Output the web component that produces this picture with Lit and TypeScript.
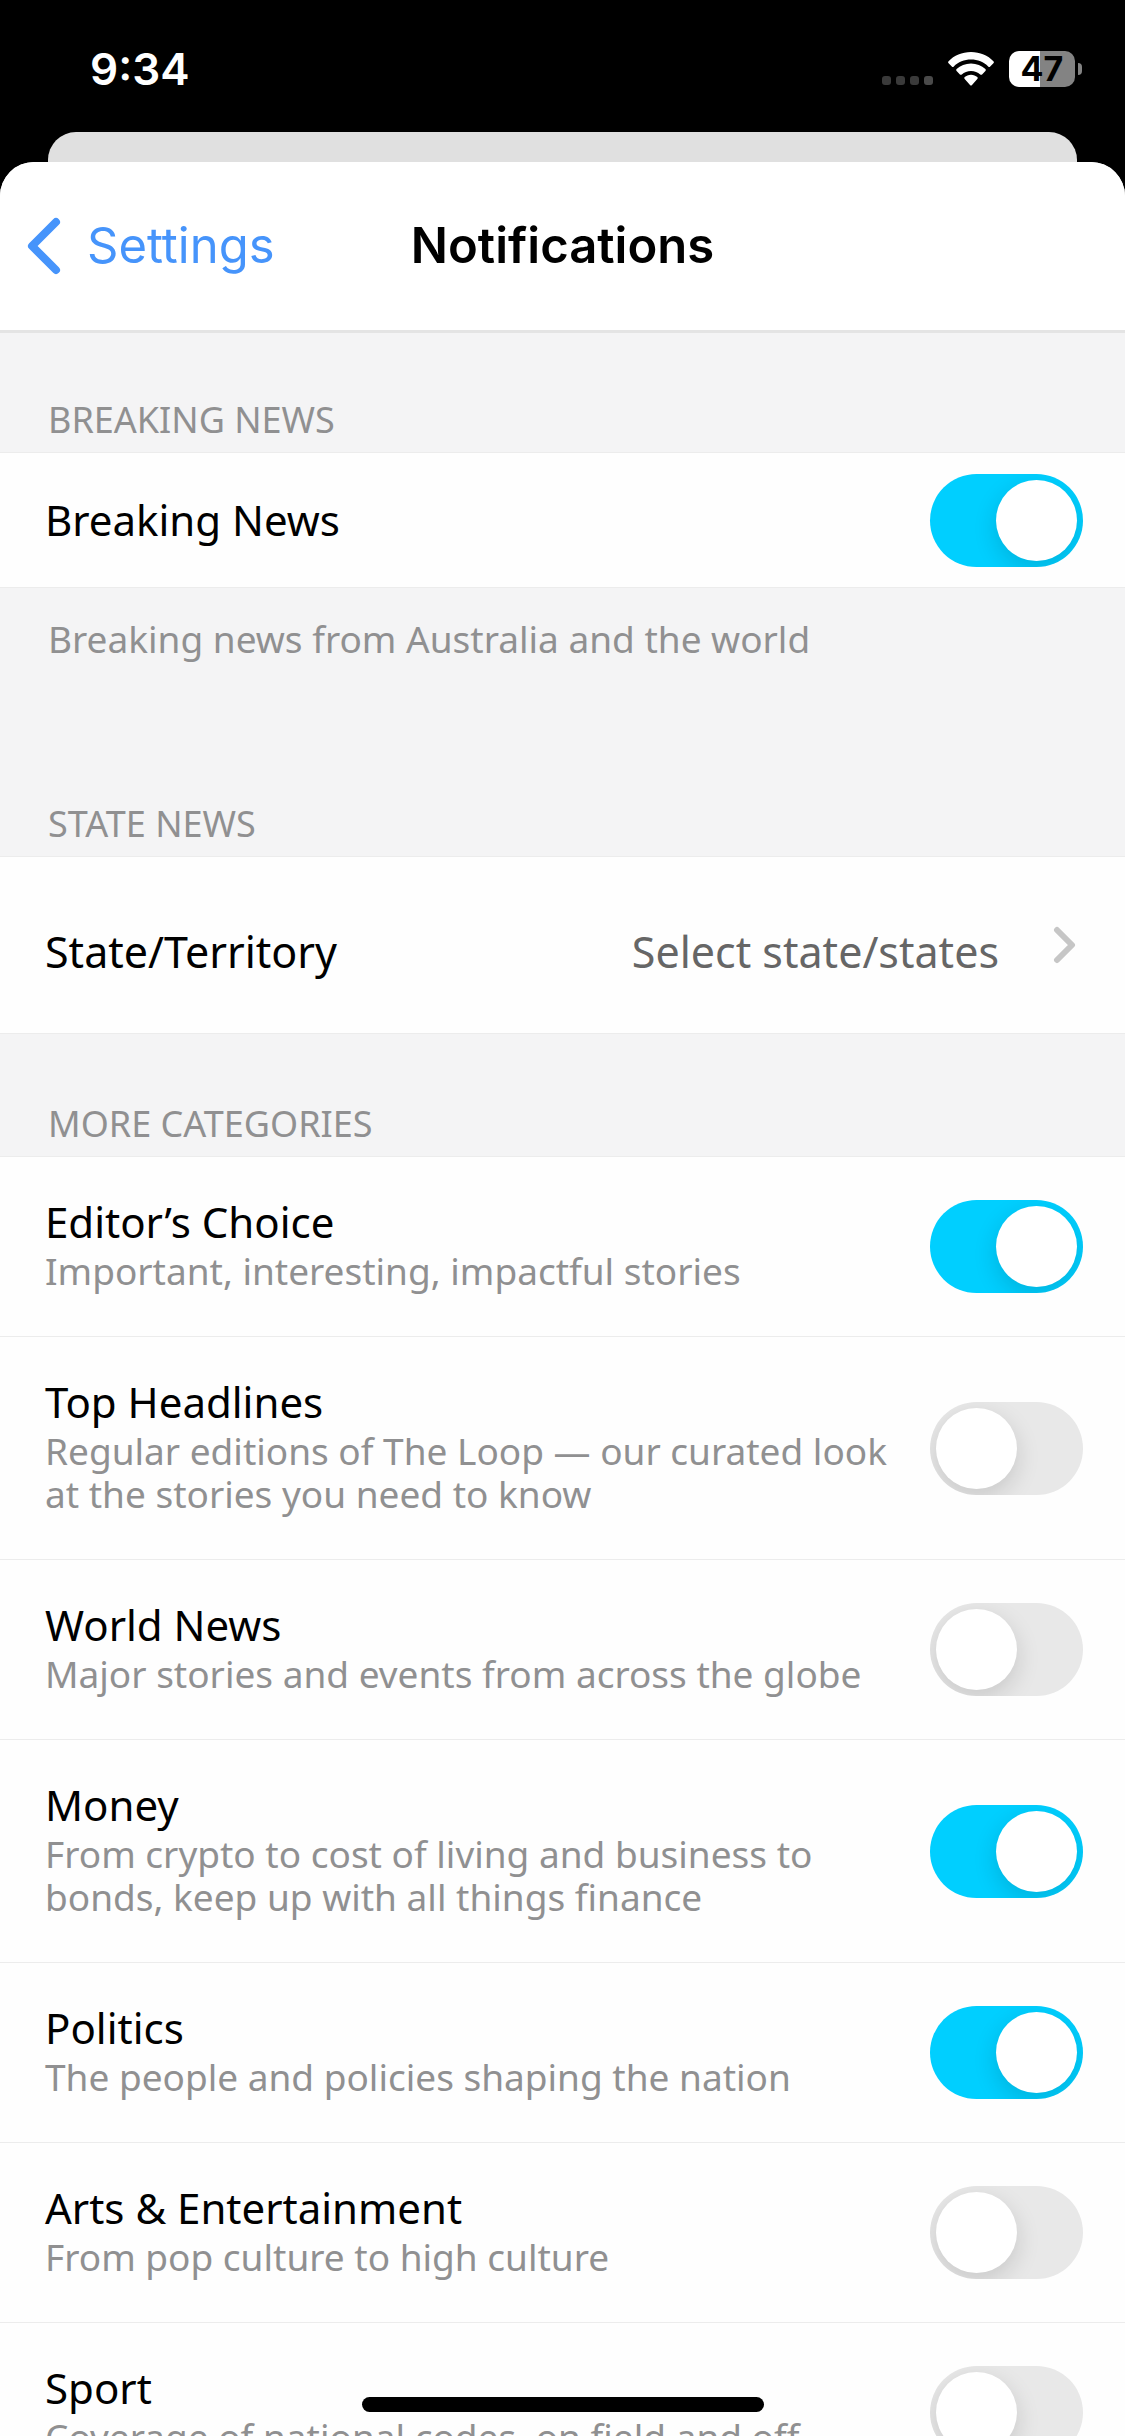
import { LitElement, html, css, svg, nothing } from "lit";
import { customElement, property, state } from "lit/decorators.js";

interface Category {
  id: string;
  title: string;
  description: string;
  on: boolean;
}

@customElement("toggle-row")
class ToggleRow extends LitElement {
  @property() heading = "";
  @property() description = "";
  @property({ type: Boolean }) on = false;

  static styles = css`
    :host {
      display: block;
      background: #fefefe;
      border-bottom: 1px solid #ececec;
    }
    .row {
      display: flex;
      align-items: center;
      gap: 32px;
      padding: 0 42px 0 45px;
    }
    .text {
      flex: 1;
      min-width: 0;
      padding: 40px 0 44px;
    }
    .single {
      padding: 42px 0 42px;
    }
    .title {
      display: block;
      font-size: 42px;
      line-height: 50px;
      color: #000;
    }
    .description {
      display: block;
      margin-top: 2px;
      font-size: 37px;
      line-height: 43px;
      color: #909091;
    }
    .switch {
      appearance: none;
      flex: none;
      box-sizing: border-box;
      width: 153px;
      height: 93px;
      margin: 0;
      padding: 6px;
      border-radius: 47px;
      background: #e8e8e8;
      overflow: hidden;
      display: flex;
      cursor: pointer;
    }
    .switch::before {
      content: "";
      width: 81px;
      height: 81px;
      border-radius: 50%;
      background: #fff;
      box-shadow: 0 8px 24px rgba(0, 0, 0, 0.14);
    }
    .switch:checked {
      background: #00cfff;
      justify-content: flex-end;
    }
  `;

  private onChange(e: Event) {
    this.on = (e.target as HTMLInputElement).checked;
  }

  render() {
    return html`
      <label class="row">
        <span class="text ${this.description ? "" : "single"}">
          <span class="title">${this.heading}</span>
          ${this.description
            ? html`<span class="description">${this.description}</span>`
            : nothing}
        </span>
        <input
          class="switch"
          type="checkbox"
          role="switch"
          .checked=${this.on}
          @change=${this.onChange}
        />
      </label>
    `;
  }
}

@customElement("status-bar")
class StatusBar extends LitElement {
  static styles = css`
    :host {
      display: flex;
      align-items: center;
      justify-content: space-between;
      height: 132px;
      box-sizing: border-box;
      padding: 6px 43px 0 90px;
      background: #000;
      color: #fff;
      font-family: Inter, "Liberation Sans", sans-serif;
    }
    .time {
      font-size: 44px;
      line-height: 54px;
      font-weight: 600;
    }
    .icons {
      display: flex;
      align-items: center;
      gap: 15px;
    }
    .signal {
      display: flex;
      align-self: flex-end;
      gap: 5px;
      padding-bottom: 2px;
    }
    .dot {
      width: 9px;
      height: 9px;
      border-radius: 3px;
      background: #3a3a3a;
    }
    .dot:last-child {
      background: #4a4a4a;
    }
    .battery {
      display: flex;
      align-items: center;
      gap: 3px;
    }
    .cell {
      width: 66px;
      height: 36px;
      border-radius: 10px;
      background: linear-gradient(to right, #fff 47%, #838383 47%);
      color: #000;
      font-size: 34px;
      line-height: 36px;
      font-weight: 700;
      text-align: center;
    }
    .cap {
      width: 4px;
      height: 12px;
      border-radius: 0 6px 6px 0;
      background: #838383;
    }
    svg {
      display: block;
    }
  `;

  render() {
    return html`
      <span class="time">9:34</span>
      <div class="icons">
        <div class="signal">
          ${[0, 1, 2, 3].map(() => html`<span class="dot"></span>`)}
        </div>
        <svg width="46" height="34" viewBox="0 0 46 34" aria-hidden="true">
          ${svg`
            <path fill="#fff" d="M23 0C14 0 6 3.500 .6 9.200a1.400 1.400 0 0 0 0 2l3.200 3.200a1.400 1.400 0 0 0 2 0C10.200 10.100 16.300 7.600 23 7.600s12.800 2.500 17.200 6.800a1.400 1.400 0 0 0 2 0l3.200-3.200a1.400 1.400 0 0 0 0-2C40 3.500 32 0 23 0Z"/>
            <path fill="#fff" d="M23 11.400c-5.600 0-10.600 2.100-14.400 5.700a1.400 1.400 0 0 0 0 2l3.300 3.300a1.400 1.400 0 0 0 1.900 0C16.200 20.200 19.400 18.900 23 18.900s6.800 1.300 9.200 3.500a1.400 1.400 0 0 0 1.900 0l3.300-3.300a1.400 1.400 0 0 0 0-2C33.600 13.500 28.600 11.400 23 11.400Z"/>
            <path fill="#fff" d="M23 22.700c-2.500 0-4.700.9-6.300 2.400a1.300 1.300 0 0 0 0 1.900l5.300 5.900a1.400 1.400 0 0 0 2 0l5.300-5.900a1.300 1.300 0 0 0 0-1.900c-1.600-1.500-3.800-2.400-6.300-2.400Z"/>
          `}
        </svg>
        <div class="battery">
          <span class="cell">47</span>
          <span class="cap"></span>
        </div>
      </div>
    `;
  }
}

@customElement("app-root")
class AppRoot extends LitElement {
  @state() private categories: Category[] = [
    { id: "editors", title: "Editor’s Choice", description: "Important, interesting, impactful stories", on: true },
    { id: "top", title: "Top Headlines", description: "Regular editions of The Loop — our curated look at the stories you need to know", on: false },
    { id: "world", title: "World News", description: "Major stories and events from across the globe", on: false },
    { id: "money", title: "Money", description: "From crypto to cost of living and business to bonds, keep up with all things finance", on: true },
    { id: "politics", title: "Politics", description: "The people and policies shaping the nation", on: true },
    { id: "arts", title: "Arts & Entertainment", description: "From pop culture to high culture", on: false },
    { id: "sport", title: "Sport", description: "Coverage of national codes, on field and off", on: false },
  ];

  static styles = css`
    :host {
      display: flex;
      flex-direction: column;
      position: relative;
      height: 100vh;
      overflow: hidden;
      background: #000;
      font-family: "Noto Sans", "Open Sans", sans-serif;
    }
    .behind {
      flex: none;
      height: 30px;
      margin: 0 48px;
      border-radius: 28px 28px 0 0;
      background: #e0e0e0;
    }
    .sheet {
      flex: 1;
      min-height: 0;
      display: flex;
      flex-direction: column;
      border-radius: 34px 34px 0 0;
      background: #f4f4f5;
      overflow: hidden;
    }
    .header {
      position: relative;
      z-index: 1;
      flex: none;
      display: grid;
      grid-template-columns: 1fr auto 1fr;
      align-items: center;
      height: 168px;
      background: #fff;
      box-shadow: 0 3px 0 #e4e4e4;
      font-family: Inter, "Liberation Sans", sans-serif;
    }
    .back {
      justify-self: start;
      display: flex;
      align-items: center;
      gap: 25px;
      padding: 0 0 0 26px;
      border: 0;
      background: none;
      color: #4694fb;
      font: inherit;
      font-size: 49px;
      line-height: 60px;
      cursor: pointer;
    }
    .page-title {
      margin: 0;
      font-size: 49px;
      line-height: 60px;
      font-weight: 600;
      color: #000;
    }
    .content {
      flex: 1;
      min-height: 0;
      overflow-y: auto;
      scrollbar-width: none;
    }
    .section-title {
      margin: 0;
      padding: 68px 48px 11px;
      font-size: 36px;
      line-height: 43px;
      font-weight: 400;
      color: #909091;
      text-transform: uppercase;
    }
    .group {
      border-top: 1px solid #ececec;
    }
    .note {
      margin: 0;
      padding: 29px 48px 74px;
      font-size: 37px;
      line-height: 43px;
      color: #909091;
    }
    .picker {
      display: flex;
      align-items: center;
      box-sizing: border-box;
      width: 100%;
      height: 177px;
      padding: 0 48px 0 45px;
      border: 0;
      border-bottom: 1px solid #ececec;
      background: #fefefe;
      font: inherit;
      font-size: 43px;
      line-height: 50px;
      color: #000;
      text-align: left;
      cursor: pointer;
    }
    .picker-text {
      flex: 1;
      display: flex;
      justify-content: space-between;
      padding-top: 14px;
      margin-right: 54px;
    }
    .picker-value {
      color: #666;
    }
    .home {
      position: absolute;
      bottom: 24px;
      left: 50%;
      width: 402px;
      height: 15px;
      transform: translateX(-50%);
      border-radius: 8px;
      background: #000;
    }
    svg {
      display: block;
      flex: none;
    }
  `;

  render() {
    return html`
      <status-bar></status-bar>
      <div class="behind"></div>
      <div class="sheet">
        <header class="header">
          <button class="back" type="button">
            <svg width="36" height="58" viewBox="0 0 36 58" aria-hidden="true">
              <path d="M30 5 L6 29 L30 53" fill="none" stroke="#4694fb" stroke-width="8" stroke-linecap="round" stroke-linejoin="round"/>
            </svg>
            <span>Settings</span>
          </button>
          <h1 class="page-title">Notifications</h1>
        </header>
        <main class="content">
          <section>
            <h2 class="section-title">Breaking News</h2>
            <div class="group">
              <toggle-row heading="Breaking News" on></toggle-row>
            </div>
            <p class="note">Breaking news from Australia and the world</p>
          </section>
          <section>
            <h2 class="section-title">State News</h2>
            <div class="group">
              <button class="picker" type="button">
                <span class="picker-text">
                  <span>State/Territory</span>
                  <span class="picker-value">Select state/states</span>
                </span>
                <svg width="24" height="40" viewBox="0 0 24 40" aria-hidden="true">
                  <path d="M4 5 L19 20 L4 35" fill="none" stroke="#c6c6c6" stroke-width="6" stroke-linecap="round" stroke-linejoin="round"/>
                </svg>
              </button>
            </div>
          </section>
          <section>
            <h2 class="section-title">More Categories</h2>
            <div class="group">
              ${this.categories.map(
                (c) => html`<toggle-row
                  .heading=${c.title}
                  .description=${c.description}
                  .on=${c.on}
                ></toggle-row>`
              )}
            </div>
          </section>
        </main>
      </div>
      <div class="home"></div>
    `;
  }
}
